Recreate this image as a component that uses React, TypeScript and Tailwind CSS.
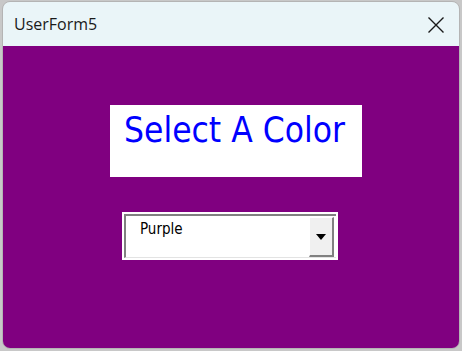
export default function App() {
  return (
    <div className="w-[462px] h-[351px] bg-[#c8c8c8] pl-[2px] pr-[2px] pt-[1px] pb-[2px]">
      <div className="h-full flex flex-col rounded-[8px] overflow-hidden border border-[#b4b4b4]">
        <div className="h-[44px] shrink-0 bg-[#eaf5f8] flex items-center justify-between pl-[11px] pr-[14px]">
          <span className="text-[16px] text-[#1a1a1a] [font-family:'Open_Sans',sans-serif]">UserForm5</span>
          <svg width="18" height="18" viewBox="0 0 18 18" className="mt-[1px]">
            <path d="M1.5 1.5 L16.5 16.5 M16.5 1.5 L1.5 16.5" stroke="#1a1a1a" strokeWidth="1.4" fill="none" />
          </svg>
        </div>
        <div className="flex-1 bg-[#800080] flex flex-col items-start">
          <div className="ml-[107px] mt-[59px] w-[252px] h-[72px] bg-white pl-[14px] pt-[3px]">
            <span className="text-[35px] leading-[44px] text-[#0000ff] [font-family:'DejaVu_Sans_Condensed','DejaVu_Sans',sans-serif]">Select A Color</span>
          </div>
          <div className="ml-[119px] mt-[35px] w-[216px] h-[48px] bg-white p-[2px]">
            <div className="w-full h-full border-t-2 border-l-2 border-[#808080] border-b border-b-[#e3e3e3] bg-white flex pr-[2px]">
              <div className="flex-1 pl-[14px] pt-[3px] text-[15px] leading-[20px] text-black [font-family:'DejaVu_Sans_Condensed','DejaVu_Sans',sans-serif]">Purple</div>
              <div className="w-[25px] mt-[1px] bg-[#f0f0f0] border-r-2 border-b-2 border-[#808080] border-l border-t border-l-white border-t-white flex items-center justify-center">
                <svg width="10" height="6" viewBox="0 0 10 6">
                  <path d="M0 0 H10 L5 6 Z" fill="#000" />
                </svg>
              </div>
            </div>
          </div>
        </div>
      </div>
    </div>
  );
}
